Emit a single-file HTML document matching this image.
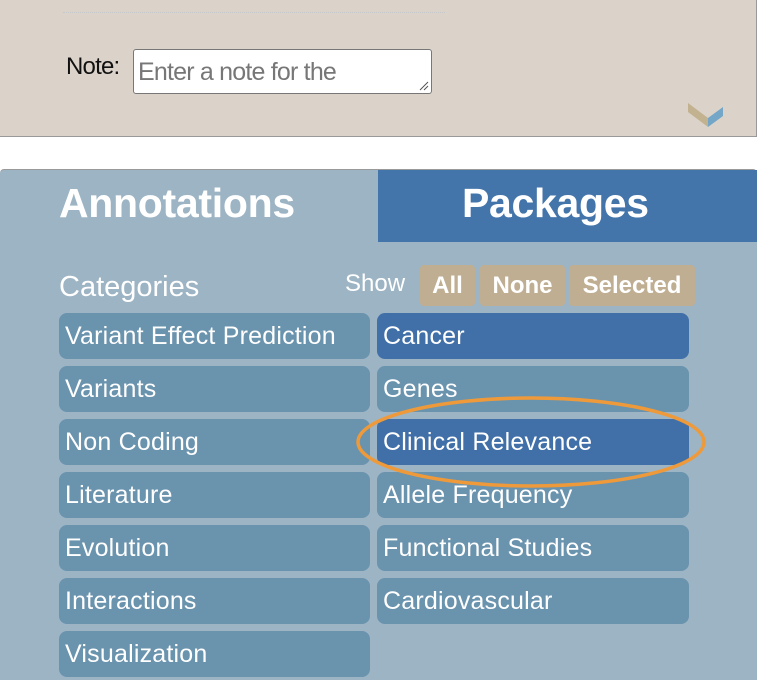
<!DOCTYPE html>
<html><head><style>
body{margin:0;width:764px;height:674px;background:#fff;position:relative;overflow:hidden;font-family:"Liberation Sans",sans-serif}
.top{position:absolute;left:0;top:0;width:756px;height:136px;background:#dbd3c9;border-right:1px solid #999;border-bottom:1px solid #999}
.dots{position:absolute;left:63px;top:12px;width:382px;border-top:1px dotted #c5c8cc}
.note{position:absolute;left:66px;top:53px;font-size:24px;color:#111;letter-spacing:-0.8px}
.ta{position:absolute;left:133px;top:49px;width:299px;height:45px;background:#fff;border:1px solid #777;border-radius:3px;box-sizing:border-box}
.ta span{position:absolute;left:4px;top:8px;font-size:25px;color:#777;letter-spacing:-0.8px}
.panel{position:absolute;left:0;top:169px;width:757px;height:510px;background:#9db4c4;border-top:1px solid #999;border-radius:4px 4px 0 0}
.tab{position:absolute;left:378px;top:0;width:379px;height:72px;background:#4374aa}
.h{position:absolute;top:10px;font-size:41px;font-weight:bold;color:#fff;letter-spacing:-0.3px}
.cat{position:absolute;left:59px;top:101px;font-size:29px;color:#fff}
.show{position:absolute;left:345px;top:100px;font-size:24px;color:#fff}
.sb{position:absolute;top:95px;height:41px;background:#bfae92;border-radius:4px;color:#fff;font-weight:bold;font-size:24px;line-height:42px;text-align:center}
.it{position:absolute;height:46px;border-radius:8px;background:#6a93ae;color:#fff;font-size:25px;line-height:47px;padding-left:6px;box-sizing:border-box;letter-spacing:0.2px}
.l{left:59px;width:311px}.r{left:377px;width:312px}
.sel{background:#4170a9}
</style></head><body>
<div class="top"><div class="dots"></div>
<div class="note">Note:</div>
<div class="ta"><span>Enter a note for the</span>
<svg style="position:absolute;right:2px;bottom:2px" width="10" height="10"><path d="M1 9L9 1M5 9L9 5" stroke="#555" stroke-width="1"/></svg></div>
<svg style="position:absolute;left:688px;top:101px" width="36" height="28"><polygon points="0,2 0,11 20,26 20,17" fill="#c2b290"/><polygon points="20,17 20,26 35,15 35,6" fill="#74a6c8"/></svg>
</div>
<div class="panel">
<div class="tab"></div>
<div class="h" style="left:59px">Annotations</div>
<div class="h" style="left:462px">Packages</div>
<div class="cat">Categories</div>
<div class="show">Show</div>
<div class="sb" style="left:420px;width:55px">All</div>
<div class="sb" style="left:480px;width:85px">None</div>
<div class="sb" style="left:569px;width:126px">Selected</div>
<div class="it l" style="top:143px">Variant Effect Prediction</div>
<div class="it l" style="top:196px">Variants</div>
<div class="it l" style="top:249px">Non Coding</div>
<div class="it l" style="top:302px">Literature</div>
<div class="it l" style="top:355px">Evolution</div>
<div class="it l" style="top:408px">Interactions</div>
<div class="it l" style="top:461px">Visualization</div>
<div class="it r sel" style="top:143px">Cancer</div>
<div class="it r" style="top:196px">Genes</div>
<div class="it r sel" style="top:249px">Clinical Relevance</div>
<div class="it r" style="top:302px">Allele Frequency</div>
<div class="it r" style="top:355px">Functional Studies</div>
<div class="it r" style="top:408px">Cardiovascular</div>
<svg style="position:absolute;left:0;top:0" width="757" height="510"><ellipse cx="531" cy="272" rx="173" ry="44" fill="none" stroke="#ee9a3a" stroke-width="3.5"/></svg>
</div>
</body></html>
